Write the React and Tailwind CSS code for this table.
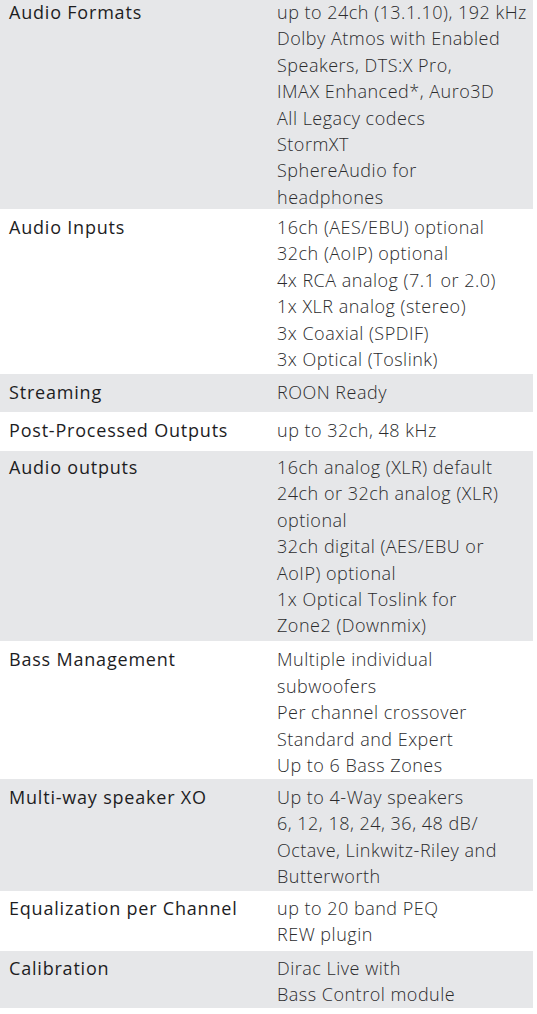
import React from "react";

const rows = [
  {
    label: "Audio Formats",
    values: [
      "up to 24ch (13.1.10), 192 kHz",
      "Dolby Atmos with Enabled",
      "Speakers, DTS:X Pro,",
      "IMAX Enhanced*, Auro3D",
      "All Legacy codecs",
      "StormXT",
      "SphereAudio for",
      "headphones",
    ],
    grey: true,
    pad: "pt-0 pb-0 h-[210px]",
  },
  {
    label: "Audio Inputs",
    values: [
      "16ch (AES/EBU) optional",
      "32ch (AoIP) optional",
      "4x RCA analog (7.1 or 2.0)",
      "1x XLR analog (stereo)",
      "3x Coaxial (SPDIF)",
      "3x Optical (Toslink)",
    ],
    grey: false,
    pad: "pt-[5px] h-[165px]",
  },
  { label: "Streaming", values: ["ROON Ready"], grey: true, pad: "pt-[4.5px] h-[37.7px]" },
  { label: "Post-Processed Outputs", values: ["up to 32ch, 48 kHz"], grey: false, pad: "pt-[5px] h-[39.3px]" },
  {
    label: "Audio outputs",
    values: [
      "16ch analog (XLR) default",
      "24ch or 32ch analog (XLR)",
      "optional",
      "32ch digital (AES/EBU or",
      "AoIP) optional",
      "1x Optical Toslink for",
      "Zone2 (Downmix)",
    ],
    grey: true,
    pad: "pt-[3px] h-[190px]",
  },
  {
    label: "Bass Management",
    values: [
      "Multiple individual",
      "subwoofers",
      "Per channel crossover",
      "Standard and Expert",
      "Up to 6 Bass Zones",
    ],
    grey: false,
    pad: "pt-[5.5px] h-[138.3px]",
  },
  {
    label: "Multi-way speaker XO",
    values: [
      "Up to 4-Way speakers",
      "6, 12, 18, 24, 36, 48 dB/",
      "Octave, Linkwitz-Riley and",
      "Butterworth",
    ],
    grey: true,
    pad: "pt-[4.7px] h-[111.7px]",
  },
  {
    label: "Equalization per Channel",
    values: ["up to 20 band PEQ", "REW plugin"],
    grey: false,
    pad: "pt-[4px] h-[60px]",
  },
  {
    label: "Calibration",
    values: ["Dirac Live with", "Bass Control module"],
    grey: true,
    pad: "pt-[4px] h-[57.3px]",
  },
];

export default function App() {
  return (
    <div
      className="w-[537px] h-[1014px] bg-white overflow-hidden"
      style={{ fontFamily: "'Open Sans', Lato, sans-serif" }}
    >
      <div className="w-[533px] -mt-px">
        {rows.map((r, i) => (
          <div
            key={i}
            className={`flex box-border overflow-hidden ${r.pad} ${r.grey ? "bg-[#e6e7e9]" : "bg-white"}`}
          >
            <div className="w-[277px] shrink-0 pl-[9px] text-[18px] leading-[26.4px] font-medium tracking-[0.8px] text-[#1d1d1f]">
              {r.label}
            </div>
            <div className="flex-1 flex flex-col text-[18px] leading-[26.4px] font-light tracking-[0.5px] text-[#2b2b2d]">
              {r.values.map((v, j) => (
                <div key={j} className="whitespace-nowrap">{v}</div>
              ))}
            </div>
          </div>
        ))}
      </div>
    </div>
  );
}
